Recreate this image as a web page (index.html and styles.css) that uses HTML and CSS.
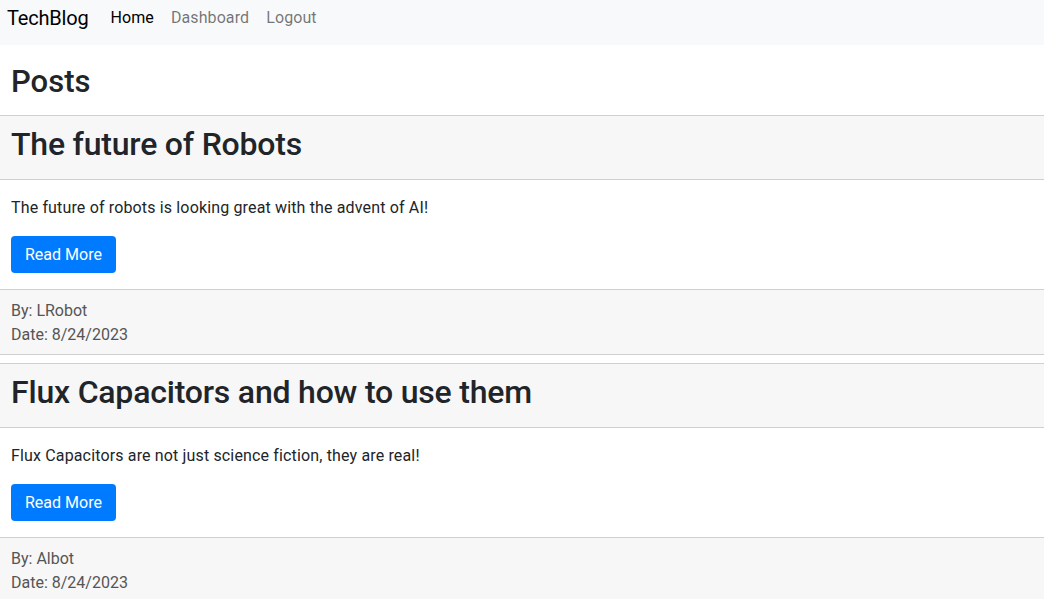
FILE: index.html
```html
<!DOCTYPE html>
<html lang="en">
<head>
<meta charset="utf-8">
<title>TechBlog</title>
<link rel="stylesheet" href="styles.css">
</head>
<body>
<nav class="navbar">
  <a class="brand" href="#">TechBlog</a>
  <a class="nav-link active" href="#">Home</a>
  <a class="nav-link" href="#">Dashboard</a>
  <a class="nav-link" href="#">Logout</a>
</nav>
<main>
  <h2 class="page-title">Posts</h2>
  <div class="card">
    <div class="card-header"><h2>The future of Robots</h2></div>
    <div class="card-body">
      <p>The future of robots is looking great with the advent of AI!</p>
      <a class="btn" href="#">Read More</a>
    </div>
    <div class="card-footer">
      <div>By: LRobot</div>
      <div>Date: 8/24/2023</div>
    </div>
  </div>
  <div class="card">
    <div class="card-header"><h2>Flux Capacitors and how to use them</h2></div>
    <div class="card-body">
      <p>Flux Capacitors are not just science fiction, they are real!</p>
      <a class="btn" href="#">Read More</a>
    </div>
    <div class="card-footer">
      <div>By: Albot</div>
      <div>Date: 8/24/2023</div>
    </div>
  </div>
</main>
</body>
</html>
```
FILE: styles.css
```css
* { box-sizing: border-box; }
html, body { margin: 0; padding: 0; }
body {
  font-family: Roboto, Inter, "Liberation Sans", sans-serif;
  font-size: 16px;
  line-height: 24px;
  color: #212529;
  background: #fff;
}
a { text-decoration: none; }
.navbar {
  display: flex;
  align-items: center;
  height: 45px;
  padding: 0 7px 9px;
  background: #f8f9fa;
}
.brand {
  font-size: 20px;
  line-height: 30px;
  color: #000;
  margin-right: 22px;
  letter-spacing: -0.2px;
}
.nav-link {
  color: rgba(0,0,0,.55);
  font-size: 16px;
  line-height: 24px;
  margin-right: 17px;
  letter-spacing: 0.1px;
}
.nav-link.active { color: #000; }
.page-title {
  margin: 0;
  padding: 18px 11px 14px;
  font-size: 31px;
  line-height: 38px;
  font-weight: 500;
}
.card {
  border-top: 1px solid #d0d0d0;
  border-bottom: 1px solid #d0d0d0;
  margin-bottom: 8px;
}
.card-header {
  background: #f7f7f7;
  border-bottom: 1px solid #d0d0d0;
  padding: 9px 11px 16px;
}
.card-header h2 {
  margin: 0;
  font-size: 32px;
  line-height: 38px;
  font-weight: 500;
  letter-spacing: -0.2px;
}
.card-body {
  padding: 16px 11px;
}
.card-body p {
  margin: 0 0 16px;
  letter-spacing: 0.15px;
}
.btn {
  display: inline-block;
  background: #007bff;
  color: #fff;
  border-radius: 4px;
  padding: 7px 14px;
  line-height: 23px;
  font-size: 16px;
}
.card-footer {
  background: #f7f7f7;
  border-top: 1px solid #d0d0d0;
  padding: 9px 11px 7px;
  color: #555;
}
```
